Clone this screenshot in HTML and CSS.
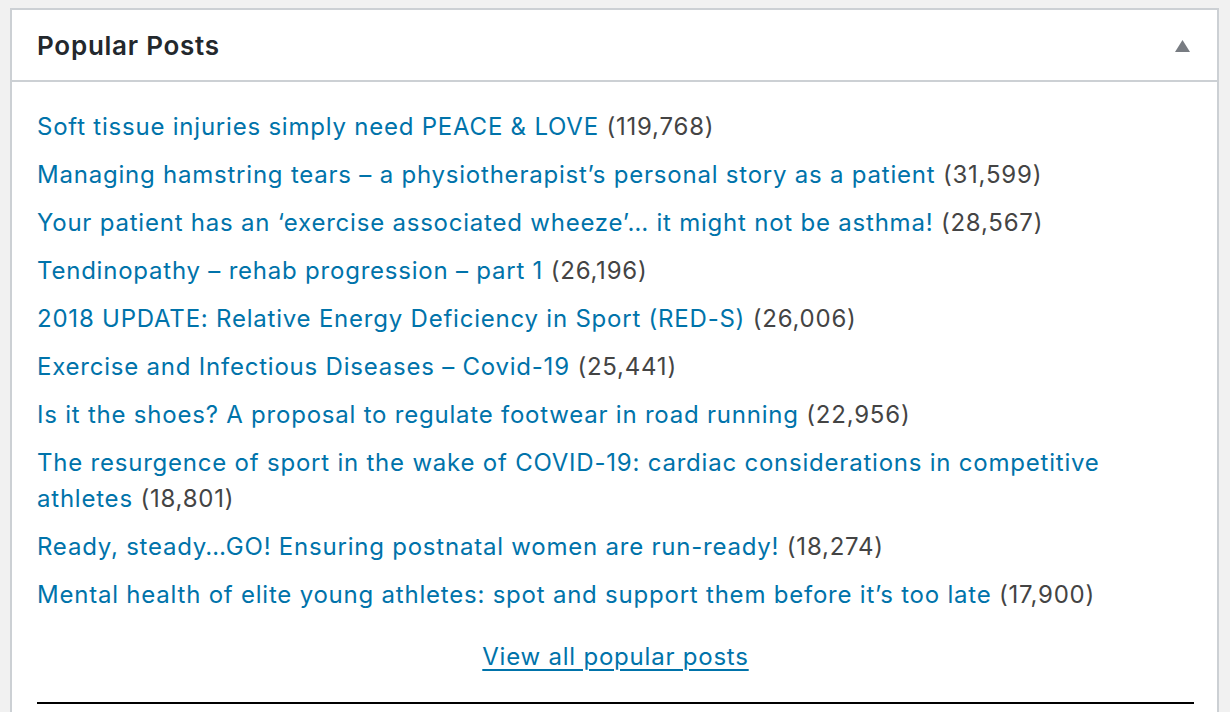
FILE: index.html
```html
<!DOCTYPE html>
<html lang="en">
  <head>
    <meta charset="UTF-8" />
    <meta name="viewport" content="width=device-width, initial-scale=1.0" />
    <title>Popular Posts</title>
    <link rel="stylesheet" href="styles.css">
  </head>
  <body>
    <div class="postbox">
      <div class="postbox-header">
        <h2>Popular Posts</h2>
        <button class="toggle" aria-label="Toggle panel">
          <svg width="15" height="12" viewBox="0 0 15 12"><path d="M7.5 0L15 12H0z" fill="#787c82"/></svg>
        </button>
      </div>

      <div class="inside">
        <ul class="popular-list">
          <li><a href="#">Soft tissue injuries simply need PEACE &amp; LOVE</a> <span class="count">(119,768)</span></li>
          <li><a href="#">Managing hamstring tears – a physiotherapist’s personal story as a patient</a> <span class="count">(31,599)</span></li>
          <li><a href="#">Your patient has an ‘exercise associated wheeze’… it might not be asthma!</a> <span class="count">(28,567)</span></li>
          <li><a href="#">Tendinopathy – rehab progression – part 1</a> <span class="count">(26,196)</span></li>
          <li><a href="#">2018 UPDATE: Relative Energy Deficiency in Sport (RED-S)</a> <span class="count">(26,006)</span></li>
          <li><a href="#">Exercise and Infectious Diseases – Covid-19</a> <span class="count">(25,441)</span></li>
          <li><a href="#">Is it the shoes? A proposal to regulate footwear in road running</a> <span class="count">(22,956)</span></li>
          <li><a href="#">The resurgence of sport in the wake of COVID-19: cardiac considerations in competitive athletes</a> <span class="count">(18,801)</span></li>
          <li><a href="#">Ready, steady…GO! Ensuring postnatal women are run-ready!</a> <span class="count">(18,274)</span></li>
          <li><a href="#">Mental health of elite young athletes: spot and support them before it’s too late</a> <span class="count">(17,900)</span></li>
        </ul>

        <p class="view-all"><a href="#">View all popular posts</a></p>

        <hr class="divider" />
      </div>
    </div>
  </body>
</html>
```

FILE: styles.css
```css
body {
  margin: 0;
  padding: 8px 11px 0 10px;
  background-color: #f1f1f1;
  font-family: Inter, 'Noto Sans', sans-serif;
  color: #444;
}
.postbox {
  background-color: #fff;
  border: 2px solid #ccd0d4;
  border-bottom: none;
}
.postbox-header {
  display: flex;
  align-items: center;
  justify-content: space-between;
  height: 70px;
  border-bottom: 2px solid #ccd0d4;
}
.postbox-header h2 {
  margin: 0;
  padding-left: 25px;
  font-size: 26px;
  font-weight: 600;
  letter-spacing: 0.75px;
  color: #23282d;
}
.toggle {
  background: none;
  border: none;
  padding: 0;
  margin-right: 27px;
  margin-top: 2px;
  display: flex;
}
.inside {
  padding: 27px 23px 40px 25px;
}
.popular-list {
  list-style: none;
  margin: 0;
  padding: 0;
}
.popular-list li {
  font-size: 24px;
  line-height: 36px;
  letter-spacing: 0.78px;
  margin-bottom: 12px;
}
a {
  color: #0073aa;
  text-decoration: none;
}
.count {
  color: #444;
}
.view-all {
  margin: 26px 0 0;
  text-align: center;
  font-size: 24px;
  line-height: 36px;
  letter-spacing: 0.78px;
}
.view-all a {
  text-decoration: underline;
  text-decoration-thickness: 2px;
  text-underline-offset: 4px;
}
.divider {
  margin: 27px 0 0;
  border: none;
  border-top: 2px solid #000;
}
```
